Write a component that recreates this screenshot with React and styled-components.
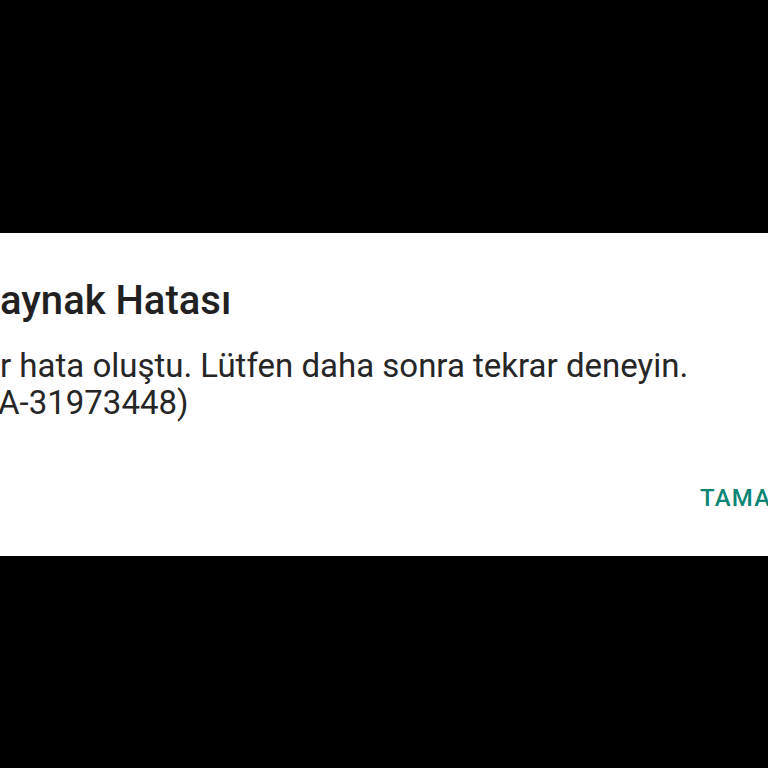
import styled, { createGlobalStyle } from "styled-components";

const Global = createGlobalStyle`
  html, body {
    margin: 0;
    padding: 0;
    background: #000;
  }
  body {
    font-family: Roboto, "Noto Sans", "Liberation Sans", sans-serif;
  }
`;

const Screen = styled.div`
  width: 768px;
  height: 768px;
  display: flex;
  flex-direction: column;
  justify-content: flex-start;
  padding-top: 233px;
  box-sizing: border-box;
  overflow: hidden;
  background: #000;
`;

const Dialog = styled.div`
  background: #fff;
  width: 100%;
  height: 323px;
  box-sizing: border-box;
  padding-top: 45px;
  overflow: hidden;
  display: flex;
  flex-direction: column;
`;

const Title = styled.h2`
  margin: 0;
  font-size: 40px;
  line-height: 46px;
  font-weight: 500;
  color: #212121;
  white-space: nowrap;
`;

const Message = styled.p`
  margin: 23px 0 0;
  font-size: 33px;
  line-height: 37px;
  font-weight: 400;
  color: #262626;
  white-space: nowrap;
`;

const Code = styled.span`
  display: block;
  margin-left: -2px;
`;

const Actions = styled.div`
  display: flex;
  margin-top: 63px;
  padding-left: 700px;
  white-space: nowrap;
`;

const Button = styled.button`
  border: none;
  background: none;
  padding: 0;
  font-family: inherit;
  font-size: 24px;
  line-height: 28px;
  font-weight: 500;
  letter-spacing: 1.2px;
  color: #0b8574;
  text-transform: uppercase;
`;

export default function App() {
  return (
    <>
      <Global />
      <Screen>
        <Dialog>
          <Title>aynak Hatası</Title>
          <Message>
            r hata oluştu. Lütfen daha sonra tekrar deneyin.
            <Code>A-31973448)</Code>
          </Message>
          <Actions>
            <Button>Tamam</Button>
          </Actions>
        </Dialog>
      </Screen>
    </>
  );
}
